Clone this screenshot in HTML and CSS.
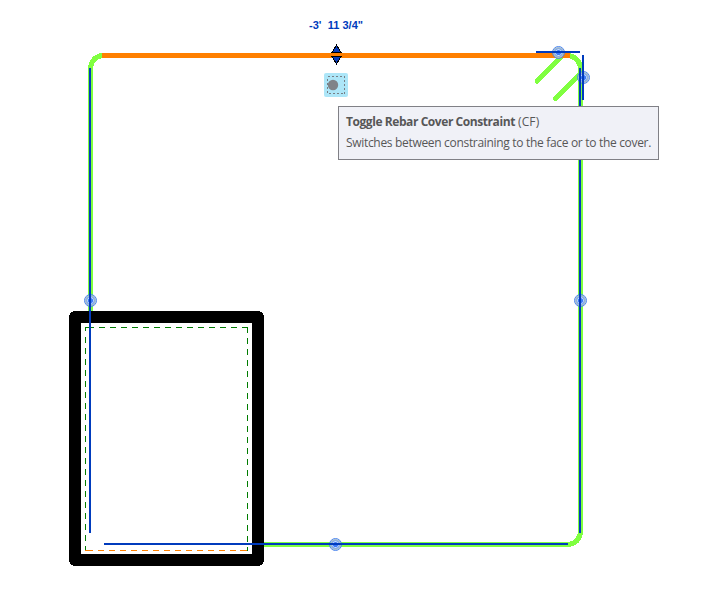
FILE: index.html
```html
<!DOCTYPE html>
<html lang="en">
<head>
<meta charset="utf-8">
<title>Rebar constraints</title>
<link rel="stylesheet" href="styles.css">
</head>
<body>
<main class="canvas">
<svg class="drawing" width="712" height="599" viewBox="0 0 712 599">
  <defs>
    <g id="handle">
      <circle r="5.500" class="handle-ring"/>
      <circle r="6" class="handle-edge"/>
      <circle r="3.800" class="handle-light"/>
      <circle r="2.600" class="handle-core"/>
    </g>
  </defs>
  <rect x="75" y="317" width="183" height="243" class="column"/>
  <path d="M88 327.500H248" class="cover"/>
  <path d="M85.500 337V550M247.500 327V551" class="cover"/>
  <path d="M85.500 331V327.500H89M245 327.500H248" class="cover corner"/>
  <path d="M87 550.500H247" class="cover face"/>
  <path d="M85 550.500H88M240 550.500H247" class="cover face corner"/>
  <g class="rebar">
    <path d="M90.500 311V68Q92 57 102 55.500"/>
    <path d="M568 55.500Q579 57 580.500 68V532Q579 543 569 544.500H264"/>
    <path d="M563 55L537 81M581 73L555.500 98.500" stroke-linecap="round"/>
  </g>
  <path d="M102 55.500H570" class="selected"/>
  <g>
    <use href="#handle" x="558.500" y="52.500"/>
    <use href="#handle" x="583.500" y="77.500"/>
    <use href="#handle" x="90.500" y="300.500"/>
    <use href="#handle" x="580.500" y="300.500"/>
    <use href="#handle" x="335.500" y="544.500"/>
  </g>
  <path class="constraint" d="M90 68V533M104 544H568M580 68V533M536 52H580M583 55V100"/>
  <path class="arrow" d="M336.500 45L332 52.500H341ZM332 56.500H341L336.500 64Z"/>
  <text x="309" y="29" textLength="54" lengthAdjust="spacing" class="dimension">-3'&#160; 11 3/4"</text>
  <rect x="324" y="73" width="24" height="24" rx="2" class="toggle"/>
  <rect x="327.500" y="76.500" width="17" height="17" class="toggle-frame"/>
  <circle cx="333" cy="85" r="5.200" class="toggle-dot"/>
</svg>
<aside class="tooltip">
  <p class="title"><b>Toggle Rebar Cover Constraint</b> <span>(CF)</span></p>
  <p class="description">Switches between constraining to the face or to the cover.</p>
</aside>
</main>
</body>
</html>
```
FILE: styles.css
```css
body { margin: 0; background: #fff; }
.canvas { position: relative; width: 712px; height: 599px; overflow: hidden; }
.drawing { display: block; }
.drawing path, .drawing rect { shape-rendering: crispEdges; }
.column { fill: none; stroke: #000; stroke-width: 12; stroke-linejoin: round; }
.cover { fill: none; stroke: #007c00; stroke-width: 1; stroke-dasharray: 6 5; }
.cover.face { stroke: #ff8000; }
.cover.corner { stroke-dasharray: none; }
.rebar { fill: none; stroke: #80ff40; stroke-width: 5; }
.selected { stroke: #ff8000; stroke-width: 5; }
.constraint { fill: none; stroke: #003bbd; stroke-width: 2; }
.handle-ring { fill: #a9bfca; }
.handle-edge { fill: none; stroke: #4c86ee; stroke-width: 1; }
.handle-light { fill: #dbe9fc; stroke: #5f93f0; stroke-width: .8; }
.handle-core { fill: #3b78f5; }
.arrow { fill: #0a3cb8; stroke: #000; stroke-width: 1; }
.dimension { font: bold 11px "Liberation Sans", sans-serif; fill: #003bbd; }
.drawing .toggle { fill: #ade6f8; shape-rendering: auto; }
.toggle-frame { fill: none; stroke: #777f86; stroke-width: 1; stroke-dasharray: 2 2; }
.toggle-dot { fill: #808388; }
.tooltip {
  position: absolute; left: 338px; top: 106px; width: 321px; height: 54px;
  box-sizing: border-box; padding: 6px 7px; border: 1px solid #808086;
  background: #f0f1f7; color: #575757; font: 12px/18px "Open Sans", sans-serif;
  white-space: nowrap;
}
.tooltip p { margin: 0; }
.title b { font-weight: 700; letter-spacing: -.43px; }
.title span { letter-spacing: .1px; }
.tooltip .description { margin-top: 3px; letter-spacing: -.315px; }
```
